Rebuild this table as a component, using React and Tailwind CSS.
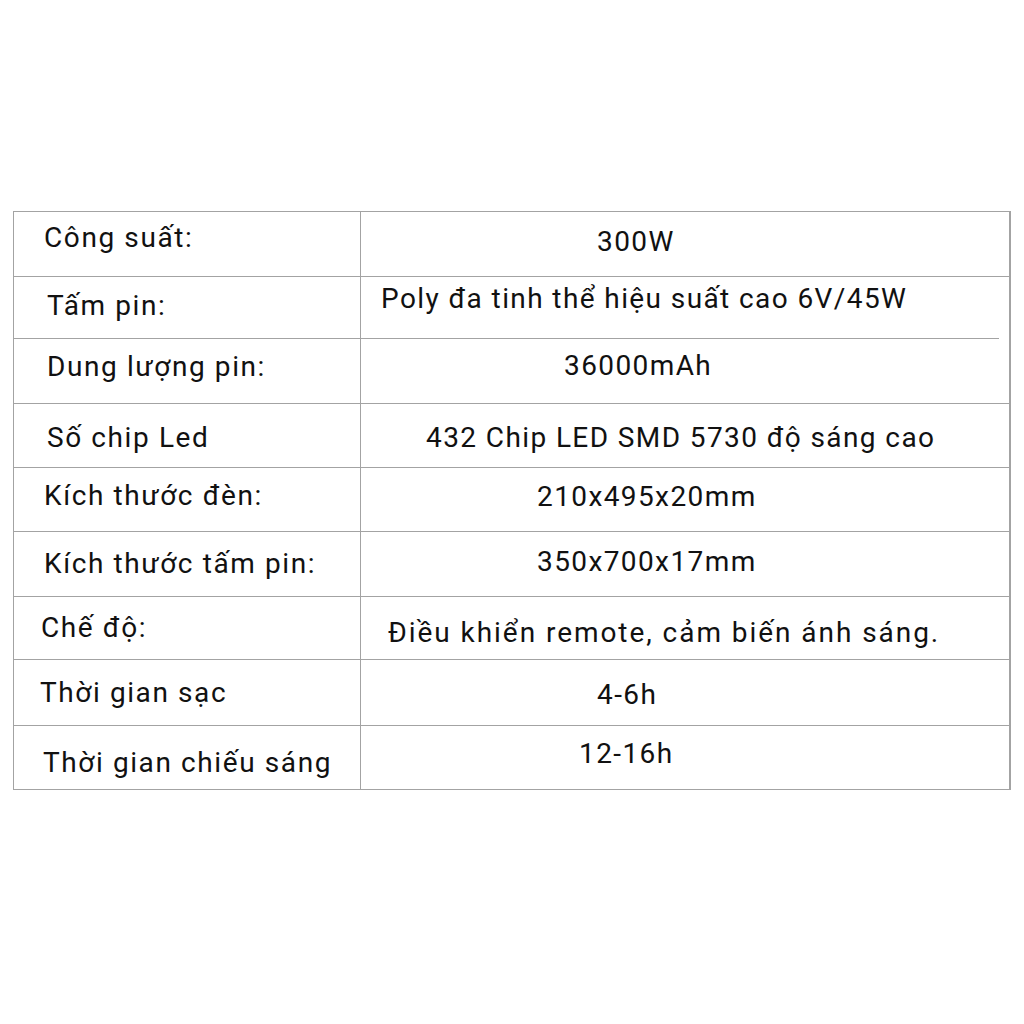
const ROWS = [
  { label: "Công suất:", value: "300W", h: 64, lx: 30, lt: 12, vx: 236, vt: 16 },
  { label: "Tấm pin:", value: "Poly đa tinh thể hiệu suất cao 6V/45W", h: 62, lx: 33, lt: 15, vx: 20, vt: 8 },
  { label: "Dung lượng pin:", value: "36000mAh", h: 65, lx: 33, lt: 14, vx: 203, vt: 13, shortLine: true },
  { label: "Số chip Led", value: "432 Chip LED SMD 5730 độ sáng cao", h: 64, lx: 33, lt: 20, vx: 65, vt: 20 },
  { label: "Kích thước đèn:", value: "210x495x20mm", h: 64, lx: 30, lt: 14, vx: 176, vt: 15 },
  { label: "Kích thước tấm pin:", value: "350x700x17mm", h: 65, lx: 30, lt: 18, vx: 176, vt: 16 },
  { label: "Chế độ:", value: "Điều khiển remote, cảm biến ánh sáng.", h: 63, lx: 27, lt: 17, vx: 27, vt: 22, wide: true },
  { label: "Thời gian sạc", value: "4-6h", h: 66, lx: 26, lt: 19, vx: 236, vt: 21 },
  { label: "Thời gian chiếu sáng", value: "12-16h", h: 64, lx: 29, lt: 23, vx: 218, vt: 14 },
];

const App = () => {
  return (
    <div
      className="min-h-screen bg-white pl-[13px] pt-[211px] text-[#111]"
      style={{ fontFamily: "Roboto, 'DejaVu Sans', sans-serif" }}
    >
      <div className="w-[998px] border-b border-l border-r-2 border-t border-[#a3a3a3]">
        {ROWS.map((row, i) => (
          <div
            key={row.label}
            className="grid grid-cols-[347px_1fr]"
            style={{ height: row.h }}
          >
            <div
              className={`border-r border-[#a3a3a3] ${i > 0 ? "border-t" : ""}`}
            >
              <p
                className="whitespace-nowrap text-[28px] leading-[28px] tracking-[1.6px]"
                style={{ paddingLeft: row.lx, paddingTop: row.lt }}
              >
                {row.label}
              </p>
            </div>
            <div className={i > 0 && !row.shortLine ? "border-t border-[#a3a3a3]" : ""}>
              {row.shortLine && <div className="mr-[10px] h-px bg-[#a3a3a3]" />}
              <p
                className={`whitespace-nowrap text-[28px] leading-[28px] ${
                  row.wide ? "tracking-[1.95px]" : "tracking-[1.4px]"
                }`}
                style={{ paddingLeft: row.vx, paddingTop: row.vt }}
              >
                {row.value}
              </p>
            </div>
          </div>
        ))}
      </div>
    </div>
  );
};

export default App;
